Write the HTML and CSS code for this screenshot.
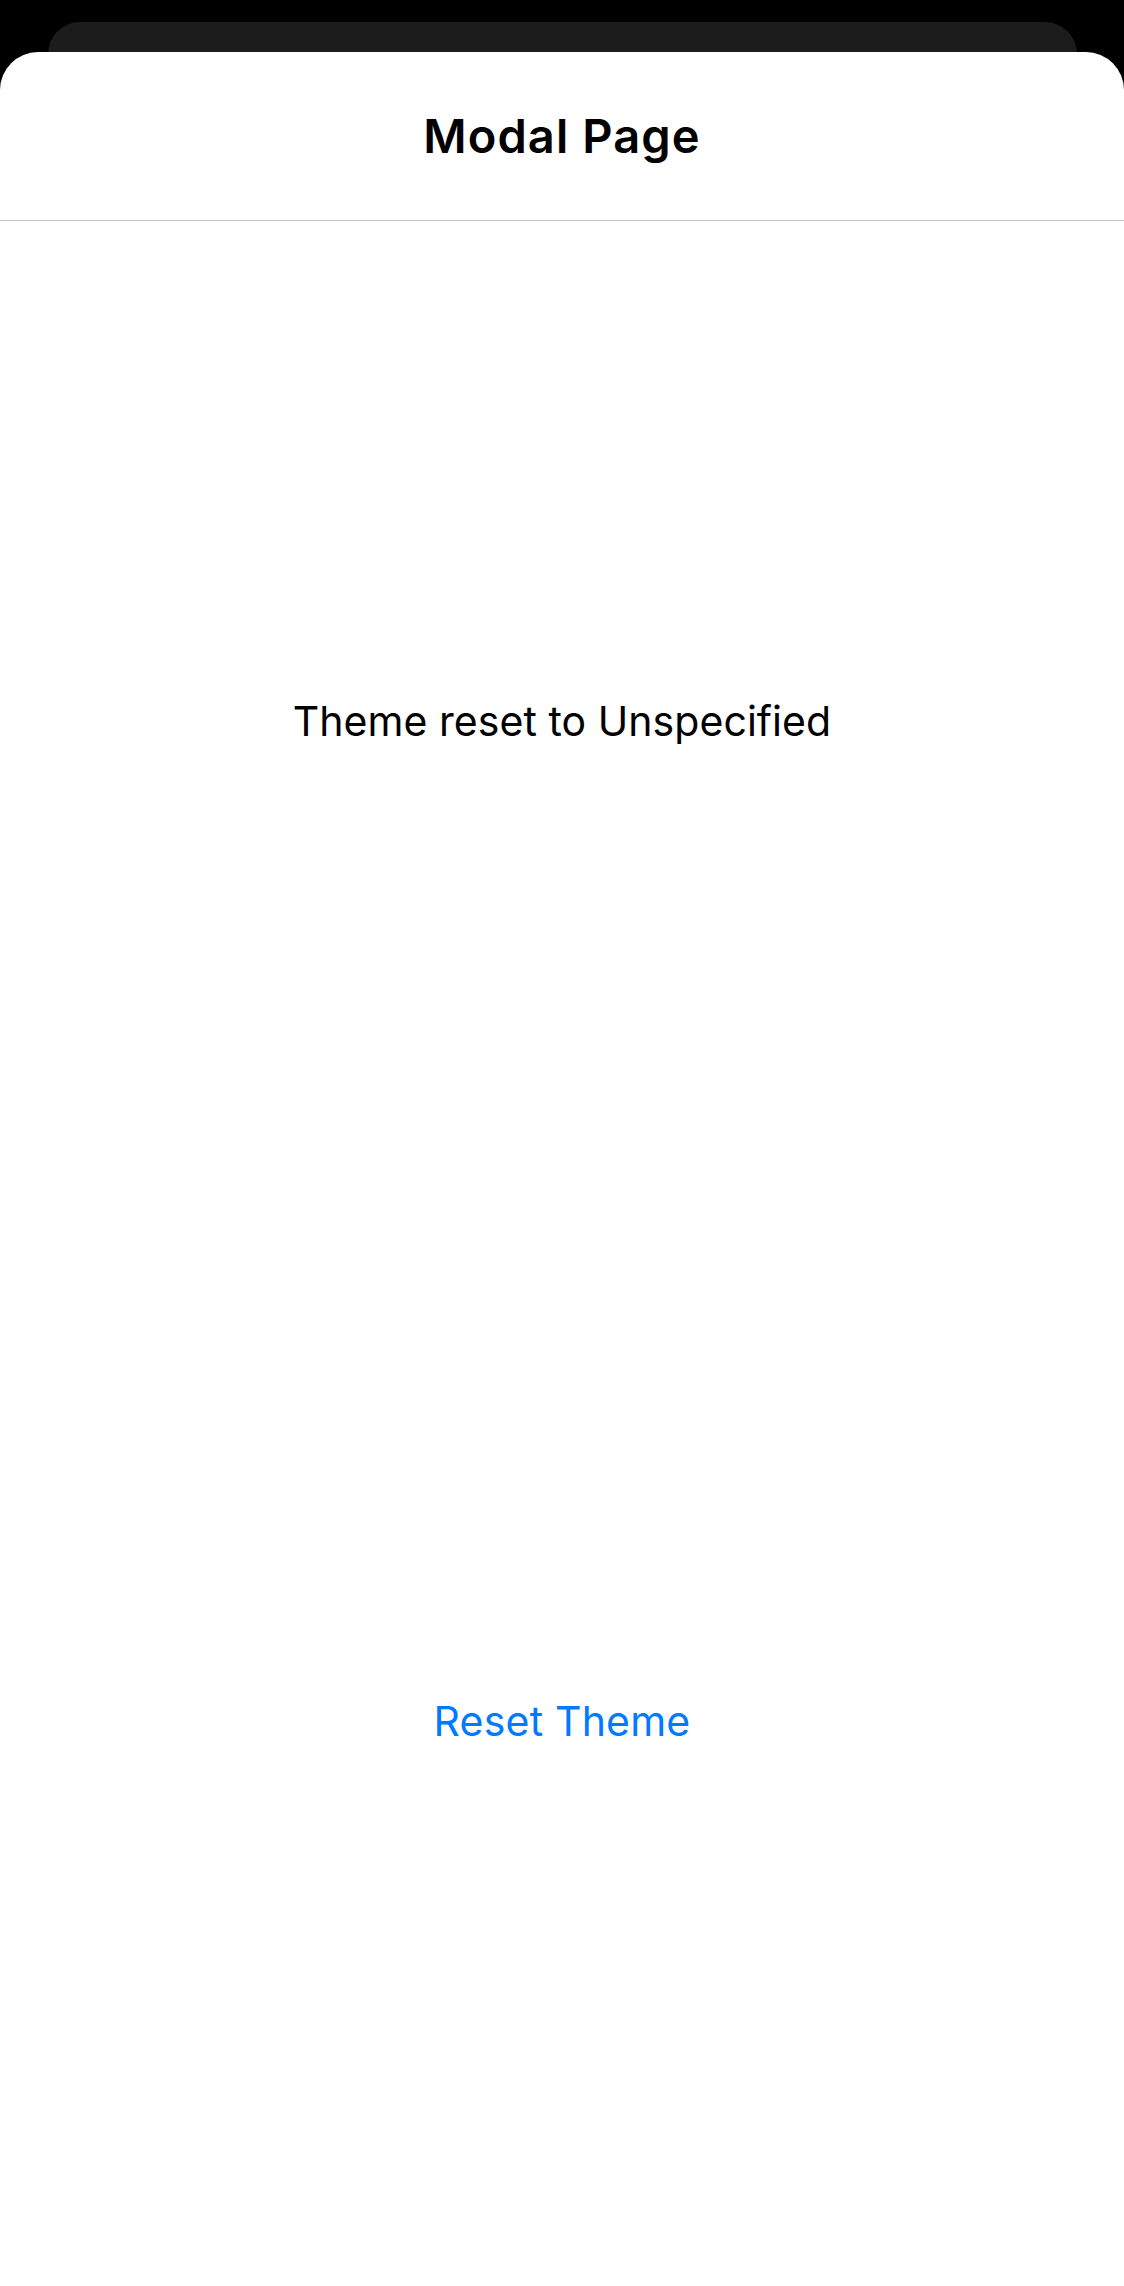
FILE: index.html
```html
<!DOCTYPE html>
<html lang="en">
<head>
<meta charset="utf-8">
<title>Modal Page</title>
<link rel="stylesheet" href="styles.css">
</head>
<body>
<div class="screen">
  <div class="behind-card"></div>
  <div class="sheet">
    <header class="sheet-header">
      <h1 class="sheet-title">Modal Page</h1>
    </header>
    <main class="sheet-content">
      <p class="status-text">Theme reset to Unspecified</p>
      <button class="link-button" type="button">Reset Theme</button>
    </main>
  </div>
</div>
</body>
</html>
```

FILE: styles.css
```css
html, body {
  margin: 0;
  padding: 0;
  background: #000000;
}

body {
  font-family: Inter, "Noto Sans", "Liberation Sans", sans-serif;
  -webkit-font-smoothing: antialiased;
}

.screen {
  width: 1124px;
  height: 2286px;
  overflow: hidden;
  padding-top: 22px;
  box-sizing: border-box;
  display: flex;
  flex-direction: column;
}

.behind-card {
  height: 60px;
  margin: 0 47px 0 48px;
  background: #1c1c1c;
  border-radius: 32px 32px 0 0;
  flex: none;
}

.sheet {
  margin-top: -30px;
  flex: 1;
  background: #ffffff;
  border-radius: 38px 38px 0 0;
  display: flex;
  flex-direction: column;
}

.sheet-header {
  height: 168px;
  border-bottom: 1px solid #c4c4c6;
  display: flex;
  align-items: center;
  justify-content: center;
  flex: none;
}

.sheet-title {
  margin: 0;
  font-size: 47px;
  font-weight: 580;
  color: #000000;
  letter-spacing: 1.1px;
  line-height: 56px;
}

.sheet-content {
  display: flex;
  flex-direction: column;
  align-items: center;
}

.status-text {
  margin: 475px 0 0;
  font-size: 41px;
  line-height: 50px;
  color: #000000;
  letter-spacing: 0.05px;
}

.link-button {
  margin-top: 950px;
  padding: 0;
  border: 0;
  background: none;
  font-family: inherit;
  font-size: 41px;
  line-height: 50px;
  color: #007aff;
  letter-spacing: 0.2px;
  cursor: pointer;
}
```
